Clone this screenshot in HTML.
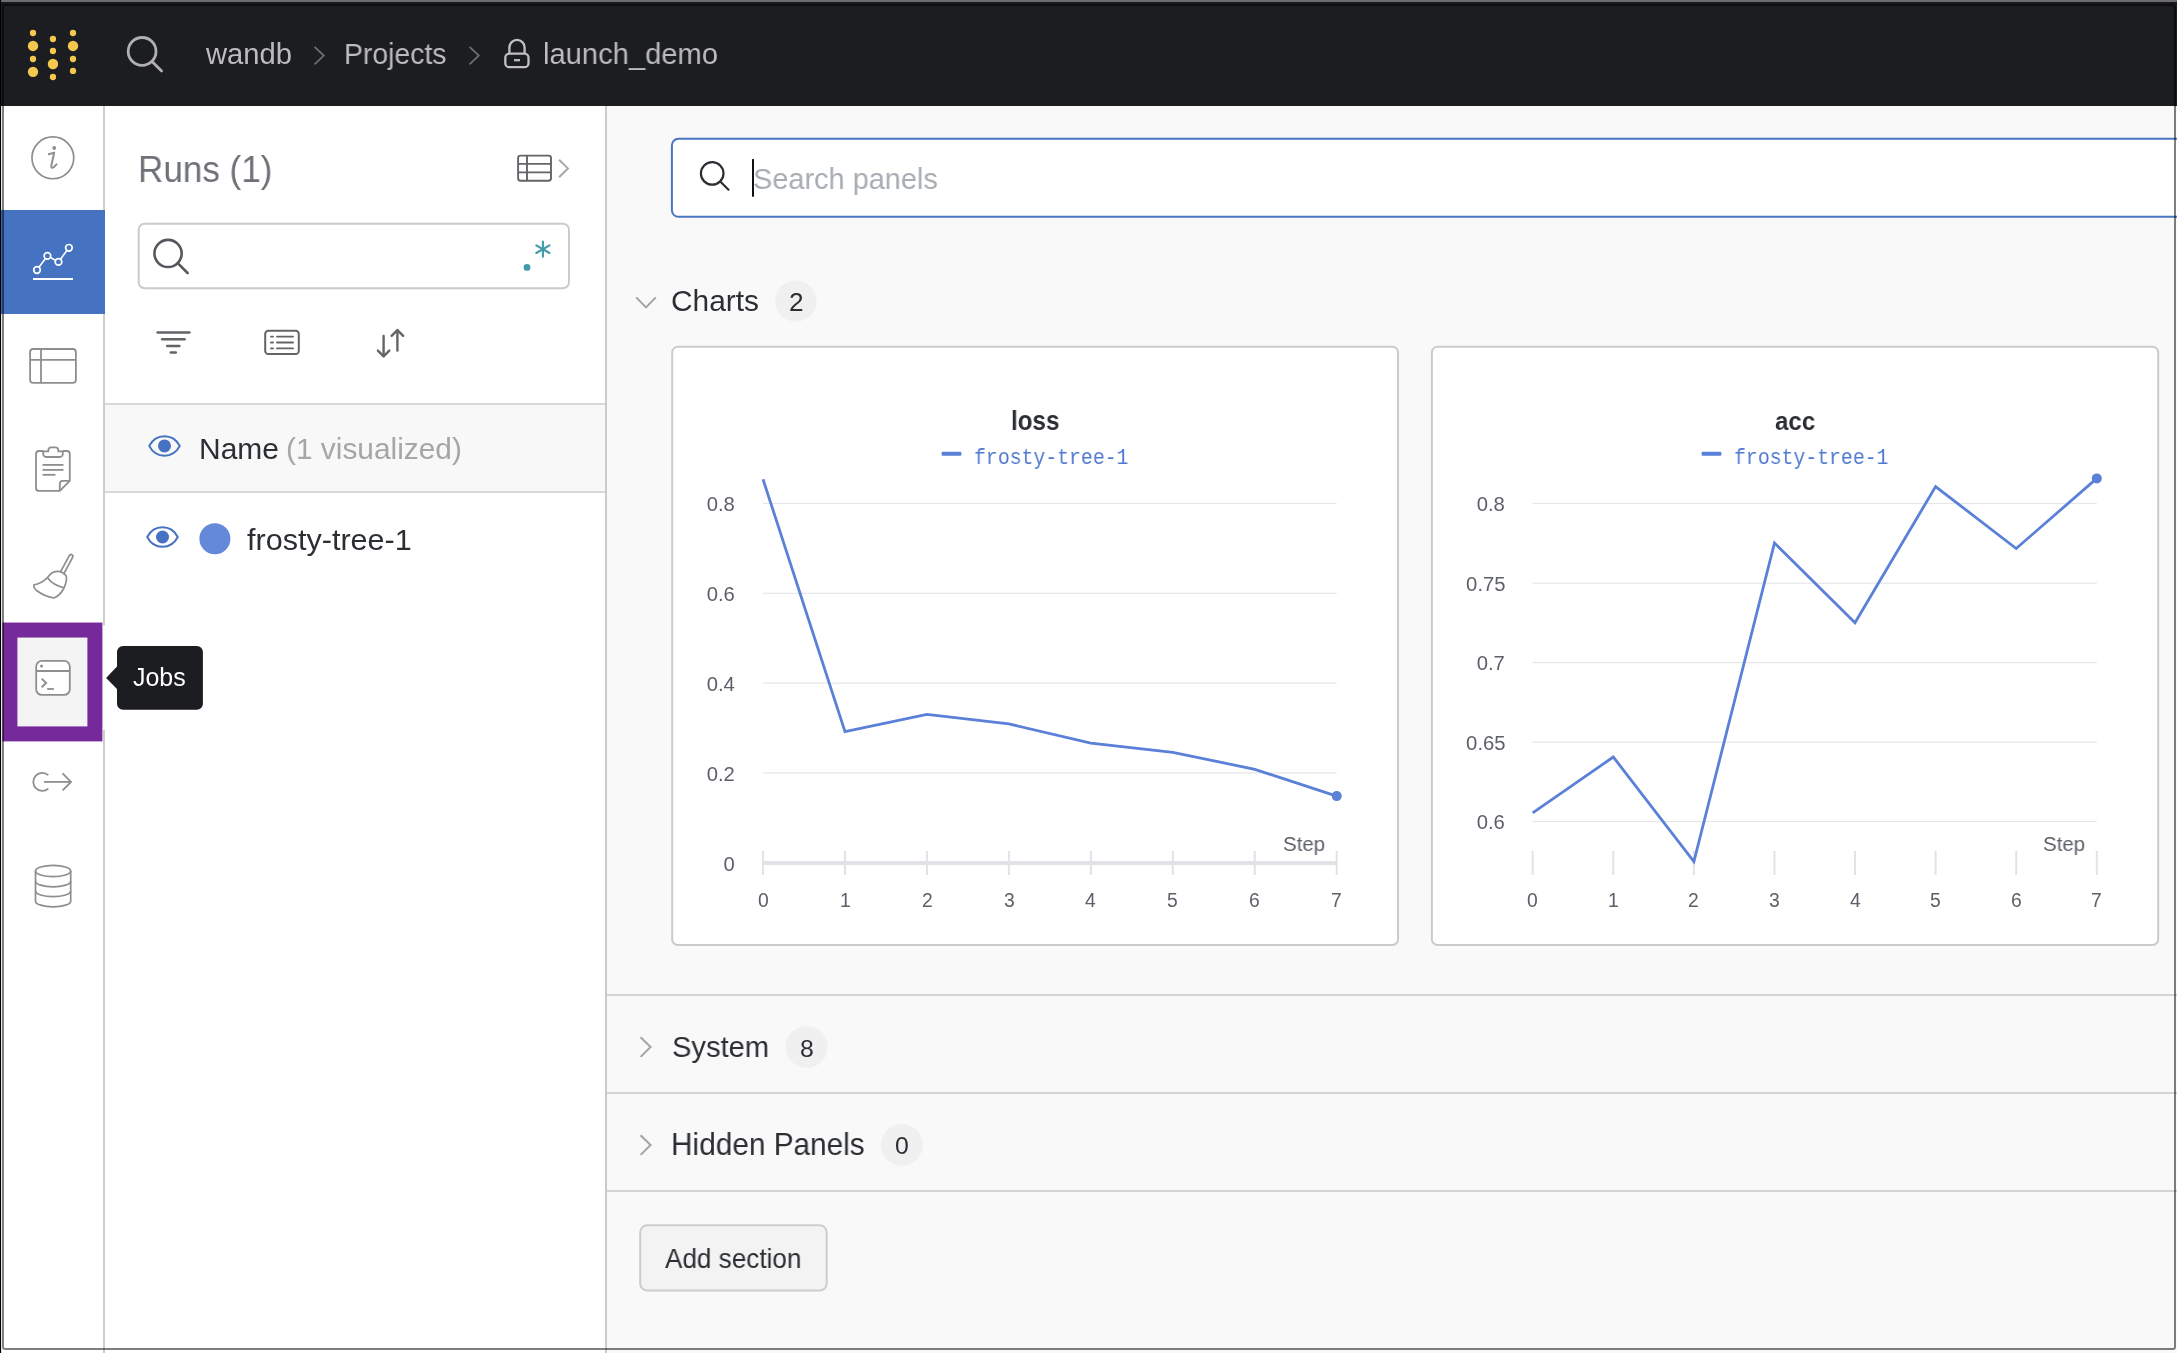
<!DOCTYPE html>
<html><head><meta charset="utf-8"><title>launch_demo</title>
<style>
html,body{margin:0;padding:0;}
body{width:2177px;height:1353px;overflow:hidden;position:relative;background:#f9f9f9;font-family:"Liberation Sans",sans-serif;}
#hdr{position:absolute;left:0;top:0;width:2177px;height:106px;background:#1c1d21;}
#side{position:absolute;left:0;top:106px;width:103px;height:1247px;background:#fff;border-right:2px solid #cdcdcd;box-sizing:content-box;}
#active{position:absolute;left:0;top:210px;width:104.5px;height:103.5px;background:#4673c1;}
#runs{position:absolute;left:105px;top:106px;width:500px;height:1247px;background:#fff;border-right:2px solid #cbcbcb;}
#namerow{position:absolute;left:105px;top:403px;width:500px;height:86px;background:#f8f8f8;border-top:2px solid #d9d9d9;border-bottom:2px solid #d9d9d9;}
.ov{position:absolute;left:0;top:0;}
.t{position:absolute;line-height:1;white-space:pre;transform-origin:0 0;will-change:transform;}
.tr{position:absolute;left:0;line-height:1;white-space:pre;text-align:right;font-family:"Liberation Sans",sans-serif;}
.tr span{display:inline-block;transform-origin:100% 0;will-change:transform;}
.tc{position:absolute;width:120px;line-height:1;white-space:pre;text-align:center;font-family:"Liberation Sans",sans-serif;}
.tc span{display:inline-block;transform-origin:50% 0;will-change:transform;}
</style></head><body>
<div id="hdr"></div>
<div id="side"></div>
<div id="active"></div>
<div id="runs"></div>
<div id="namerow"></div>
<svg class="ov" width="2177" height="1353" viewBox="0 0 2177 1353">
<circle cx="33" cy="33" r="3.15" fill="#f4c84f"/>
<circle cx="33" cy="45.94" r="5.19" fill="#f4c84f"/>
<circle cx="33" cy="58.98" r="3.15" fill="#f4c84f"/>
<circle cx="33" cy="71.84" r="5.19" fill="#f4c84f"/>
<circle cx="52.95" cy="39.02" r="3.15" fill="#f4c84f"/>
<circle cx="52.95" cy="51" r="3.15" fill="#f4c84f"/>
<circle cx="52.95" cy="64.04" r="5.19" fill="#f4c84f"/>
<circle cx="52.95" cy="76.98" r="3.15" fill="#f4c84f"/>
<circle cx="72.99" cy="33" r="3.15" fill="#f4c84f"/>
<circle cx="72.99" cy="45.94" r="5.19" fill="#f4c84f"/>
<circle cx="72.99" cy="58.98" r="3.15" fill="#f4c84f"/>
<circle cx="72.99" cy="70.95" r="3.15" fill="#f4c84f"/>
<circle cx="142.1" cy="51.4" r="13.9" fill="none" stroke="#b0b0b0" stroke-width="2.8"/>
<line x1="152" y1="61.5" x2="161.6" y2="71.1" stroke="#b0b0b0" stroke-width="2.8" stroke-linecap="round"/>
<polyline points="314.5,46.8 323.8,55.6 314.5,64.4" fill="none" stroke="#6e6e70" stroke-width="1.8"/>
<polyline points="469.5,46.8 478.8,55.6 469.5,64.4" fill="none" stroke="#6e6e70" stroke-width="1.8"/>
<path d="M509.4 53 V47.5 A7.6 7.6 0 0 1 524.6 47.5 V53" fill="none" stroke="#c0c0c0" stroke-width="2.3"/>
<rect x="505.3" y="53.6" width="23.2" height="13.6" rx="4" fill="none" stroke="#c0c0c0" stroke-width="2.3"/>
<line x1="514" y1="60.2" x2="520" y2="60.2" stroke="#c0c0c0" stroke-width="2.3"/>
<circle cx="52.85" cy="157.85" r="20.9" fill="none" stroke="#8e8e8e" stroke-width="1.7"/>
<circle cx="54.2" cy="148" r="1.9" fill="#8e8e8e"/>
<path d="M48.8 154.3 L54.2 152.6 L51.3 165.8 Q51 168.6 53.6 167.4 L56.5 164.4" fill="none" stroke="#8e8e8e" stroke-width="2" stroke-linejoin="round" stroke-linecap="round"/>
<polyline points="37,270 47.4,255.9 58.5,261.9 68.9,247.8" fill="none" stroke="#fff" stroke-width="1.6"/>
<circle cx="37" cy="270" r="3.3" fill="#4673c1" stroke="#fff" stroke-width="1.7"/>
<circle cx="47.4" cy="255.9" r="3.3" fill="#4673c1" stroke="#fff" stroke-width="1.7"/>
<circle cx="58.5" cy="261.9" r="3.3" fill="#4673c1" stroke="#fff" stroke-width="1.7"/>
<circle cx="68.9" cy="247.8" r="3.3" fill="#4673c1" stroke="#fff" stroke-width="1.7"/>
<line x1="33" y1="279" x2="73" y2="279" stroke="#fff" stroke-width="2"/>
<rect x="30.1" y="349" width="45.8" height="33.9" rx="3.2" fill="none" stroke="#8e8e8e" stroke-width="1.8"/>
<line x1="30.1" y1="359.9" x2="75.9" y2="359.9" stroke="#8e8e8e" stroke-width="1.8"/>
<line x1="41" y1="349" x2="41" y2="382.9" stroke="#8e8e8e" stroke-width="1.8"/>
<path d="M43.2 451 H39 A3 3 0 0 0 36 454 V487.9 A3 3 0 0 0 39 490.9 H59.8 L69.8 480.8 V454 A3 3 0 0 0 66.8 451 H62.8" fill="none" stroke="#8e8e8e" stroke-width="1.8" stroke-linejoin="round"/>
<path d="M48.3 451.4 V450.3 A3 3 0 0 1 51.3 447.3 H55.3 A3 3 0 0 1 58.3 450.3 V451.4 H62.8 V454 A3 3 0 0 1 59.8 457 H46.2 A3 3 0 0 1 43.2 454 V451.4 Z" fill="none" stroke="#8e8e8e" stroke-width="1.8" stroke-linejoin="round"/>
<path d="M59.8 490.6 V483.8 A3 3 0 0 1 62.8 480.8 H69.6" fill="none" stroke="#8e8e8e" stroke-width="1.8"/>
<line x1="42.5" y1="464.9" x2="63.5" y2="464.9" stroke="#8e8e8e" stroke-width="1.8"/>
<line x1="42.5" y1="469.9" x2="63.5" y2="469.9" stroke="#8e8e8e" stroke-width="1.8"/>
<line x1="42.5" y1="474.8" x2="55.4" y2="474.8" stroke="#8e8e8e" stroke-width="1.8"/>
<path d="M60.2 572.4 L69.3 555.6 A1.8 1.8 0 0 1 72.6 557.3 L63.5 574.3" fill="none" stroke="#8e8e8e" stroke-width="1.7" stroke-linejoin="round"/>
<path d="M47.4 577.7 Q52 570.5 58.5 571.4 Q64 572.3 66.2 576 Q67.5 580 63.8 588.5 Q59.6 596 54 598 Q44.4 596.5 36.6 590.5 Q33 587 33.9 584.9 Q41 584 47.4 577.7 Z" fill="none" stroke="#8e8e8e" stroke-width="1.7" stroke-linejoin="round"/>
<path d="M47.4 577.7 Q53 585 63.9 587.8" fill="none" stroke="#8e8e8e" stroke-width="1.7"/>
<rect x="102" y="625.4" width="4" height="104.6" fill="#fcfcfc"/>
<rect x="9.9" y="630.05" width="85" height="103.85" fill="#f4f4f4" stroke="#75299b" stroke-width="15"/>
<rect x="36.2" y="660.9" width="33.6" height="34" rx="5.6" fill="#fff" stroke="#8e8e8e" stroke-width="1.8"/>
<line x1="36.2" y1="671" x2="69.8" y2="671" stroke="#8e8e8e" stroke-width="1.8"/>
<circle cx="41.5" cy="666" r="1.5" fill="#8e8e8e"/>
<polyline points="41.7,678.6 46.1,683 41.7,687.3" fill="none" stroke="#8e8e8e" stroke-width="1.9"/>
<line x1="47.2" y1="689" x2="53.9" y2="689" stroke="#8e8e8e" stroke-width="1.8"/>
<path d="M123 646 H196.9 A6 6 0 0 1 202.9 652 V703.8 A6 6 0 0 1 196.9 709.8 H123 A6 6 0 0 1 117 703.8 V689.1 L106.1 677.9 L117 666.6 V652 A6 6 0 0 1 123 646 Z" fill="#1c1d21"/>
<path d="M48.3 775.2 A9 9 0 1 0 48.3 788.6" fill="none" stroke="#8e8e8e" stroke-width="1.8"/>
<line x1="44" y1="781.9" x2="71" y2="781.9" stroke="#8e8e8e" stroke-width="1.8"/>
<polyline points="62.6,773.4 71,781.9 62.6,790.3" fill="none" stroke="#8e8e8e" stroke-width="1.8"/>
<ellipse cx="53.1" cy="871" rx="17.6" ry="5.6" fill="none" stroke="#8e8e8e" stroke-width="1.7"/>
<path d="M35.5 871 V901.2 A17.6 5.6 0 0 0 70.7 901.2 V871" fill="none" stroke="#8e8e8e" stroke-width="1.7"/>
<path d="M35.5 881.2 A17.6 5.6 0 0 0 70.7 881.2" fill="none" stroke="#8e8e8e" stroke-width="1.7"/>
<path d="M35.5 891 A17.6 5.6 0 0 0 70.7 891" fill="none" stroke="#8e8e8e" stroke-width="1.7"/>
<rect x="518.1" y="155.6" width="32.9" height="25.1" rx="2.4" fill="none" stroke="#626468" stroke-width="1.9"/>
<line x1="518.1" y1="163.9" x2="551" y2="163.9" stroke="#626468" stroke-width="1.9"/>
<line x1="518.1" y1="172.4" x2="551" y2="172.4" stroke="#626468" stroke-width="1.9"/>
<line x1="527" y1="155.6" x2="527" y2="180.7" stroke="#626468" stroke-width="1.9"/>
<polyline points="559.1,159.8 567.9,168.4 559.1,177.2" fill="none" stroke="#a8a8a8" stroke-width="2"/>
<rect x="138.7" y="223.7" width="430.3" height="64.5" rx="6" fill="#fff" stroke="#cbcbcb" stroke-width="2"/>
<circle cx="168.05" cy="253.45" r="13.6" fill="none" stroke="#55585d" stroke-width="2.6"/>
<line x1="177.7" y1="263.1" x2="187.6" y2="273" stroke="#55585d" stroke-width="2.6" stroke-linecap="round"/>
<circle cx="527" cy="267.4" r="3.4" fill="#439aab"/>
<line x1="542.90" y1="241.60" x2="542.90" y2="256.80" stroke="#439aab" stroke-width="2.1" stroke-linecap="round"/>
<line x1="536.32" y1="245.40" x2="549.48" y2="253.00" stroke="#439aab" stroke-width="2.1" stroke-linecap="round"/>
<line x1="549.48" y1="245.40" x2="536.32" y2="253.00" stroke="#439aab" stroke-width="2.1" stroke-linecap="round"/>
<line x1="157.6" y1="332.4" x2="189.4" y2="332.4" stroke="#626468" stroke-width="2.5" stroke-linecap="round"/>
<line x1="162.2" y1="339.2" x2="184.6" y2="339.2" stroke="#626468" stroke-width="2.5" stroke-linecap="round"/>
<line x1="167.2" y1="345.9" x2="179.4" y2="345.9" stroke="#626468" stroke-width="2.5" stroke-linecap="round"/>
<line x1="170.8" y1="352.5" x2="175.8" y2="352.5" stroke="#626468" stroke-width="2.5" stroke-linecap="round"/>
<rect x="265.2" y="330.7" width="33.6" height="23.4" rx="3.2" fill="none" stroke="#626468" stroke-width="2"/>
<line x1="271" y1="336.6" x2="273" y2="336.6" stroke="#626468" stroke-width="1.9" stroke-linecap="round"/>
<line x1="277" y1="336.6" x2="293" y2="336.6" stroke="#626468" stroke-width="1.9" stroke-linecap="round"/>
<line x1="271" y1="342.5" x2="273" y2="342.5" stroke="#626468" stroke-width="1.9" stroke-linecap="round"/>
<line x1="277" y1="342.5" x2="293" y2="342.5" stroke="#626468" stroke-width="1.9" stroke-linecap="round"/>
<line x1="271" y1="348.4" x2="273" y2="348.4" stroke="#626468" stroke-width="1.9" stroke-linecap="round"/>
<line x1="277" y1="348.4" x2="293" y2="348.4" stroke="#626468" stroke-width="1.9" stroke-linecap="round"/>
<line x1="383.6" y1="336" x2="383.6" y2="356" stroke="#626468" stroke-width="2.4" stroke-linecap="round"/>
<polyline points="377.9,350.6 383.6,356.3 389.3,350.6" fill="none" stroke="#626468" stroke-width="2.4" stroke-linecap="round" stroke-linejoin="round"/>
<line x1="397.4" y1="330.5" x2="397.4" y2="350.6" stroke="#626468" stroke-width="2.4" stroke-linecap="round"/>
<polyline points="391.6,335.8 397.4,330.1 403.2,335.8" fill="none" stroke="#626468" stroke-width="2.4" stroke-linecap="round" stroke-linejoin="round"/>
<path d="M149.20 445.9 C156.00 432.90 173.00 432.90 179.80 445.9 C173.00 458.90 156.00 458.90 149.20 445.9 Z" fill="none" stroke="#4572c3" stroke-width="2" stroke-linejoin="round"/><circle cx="164.5" cy="445.9" r="6.5" fill="#4572c3"/>
<path d="M147.20 537 C154.00 524.00 171.00 524.00 177.80 537 C171.00 550.00 154.00 550.00 147.20 537 Z" fill="none" stroke="#4572c3" stroke-width="2" stroke-linejoin="round"/><circle cx="162.5" cy="537" r="6.5" fill="#4572c3"/>
<circle cx="214.9" cy="538.7" r="15.5" fill="#6489d9"/>
<rect x="671.9" y="138.8" width="1520" height="78" rx="6.5" fill="#fff" stroke="#4a76c6" stroke-width="2"/>
<circle cx="712.2" cy="173.4" r="11.3" fill="none" stroke="#2b2e33" stroke-width="2.2"/>
<line x1="720.5" y1="181.7" x2="728.5" y2="189.7" stroke="#2b2e33" stroke-width="2.2" stroke-linecap="round"/>
<rect x="752" y="159.1" width="2" height="37.6" fill="#111"/>
<polyline points="636.2,297.4 646,307.4 655.8,297.4" fill="none" stroke="#a3a3a3" stroke-width="2"/>
<circle cx="795.9" cy="301" r="20.7" fill="#f0f0f0"/>
<rect x="672.2" y="346.8" width="725.8" height="598.1" rx="5.5" fill="#fff" stroke="#cbcbcb" stroke-width="2"/>
<rect x="1431.9" y="346.8" width="726.3" height="598.1" rx="5.5" fill="#fff" stroke="#cbcbcb" stroke-width="2"/>
<rect x="607" y="994" width="1570" height="2" fill="#d4d4d4"/>
<rect x="607" y="1092" width="1570" height="2" fill="#d4d4d4"/>
<rect x="607" y="1190" width="1570" height="2" fill="#d4d4d4"/>
<polyline points="640.6,1037.2 650.6,1047.05 640.6,1056.9" fill="none" stroke="#a3a3a3" stroke-width="2"/>
<polyline points="640.6,1135.2 650.6,1145.05 640.6,1154.9" fill="none" stroke="#a3a3a3" stroke-width="2"/>
<circle cx="806.7" cy="1046.9" r="21" fill="#f0f0f0"/>
<circle cx="901.8" cy="1144.8" r="21" fill="#f0f0f0"/>
<rect x="640.2" y="1225.3" width="186.5" height="65.2" rx="7" fill="#f3f3f3" stroke="#cdcdcd" stroke-width="2"/>
<rect x="763" y="502.9" width="573.7" height="1.2" fill="#e6e6ea"/>
<rect x="763" y="592.6999999999999" width="573.7" height="1.2" fill="#e6e6ea"/>
<rect x="763" y="682.5" width="573.7" height="1.2" fill="#e6e6ea"/>
<rect x="763" y="772.3" width="573.7" height="1.2" fill="#e6e6ea"/>
<rect x="763" y="861" width="573.7" height="4" fill="#e3e3e7"/>
<rect x="762.0" y="851" width="2" height="24" fill="#e3e3e7"/>
<rect x="843.96" y="851" width="2" height="24" fill="#e3e3e7"/>
<rect x="925.92" y="851" width="2" height="24" fill="#e3e3e7"/>
<rect x="1007.88" y="851" width="2" height="24" fill="#e3e3e7"/>
<rect x="1089.84" y="851" width="2" height="24" fill="#e3e3e7"/>
<rect x="1171.8" y="851" width="2" height="24" fill="#e3e3e7"/>
<rect x="1253.76" y="851" width="2" height="24" fill="#e3e3e7"/>
<rect x="1335.7199999999998" y="851" width="2" height="24" fill="#e3e3e7"/>
<polyline points="763.0,479.2 845.0,731.7 926.9,714.3 1008.9,723.9 1090.8,743.2 1172.8,752.3 1254.8,769.3 1336.7,796.1" fill="none" stroke="#5a80d7" stroke-width="2.8" stroke-linejoin="miter"/>
<circle cx="1336.7199999999998" cy="796.1" r="5" fill="#5a80d7"/>
<rect x="941.6" y="451.8" width="19.8" height="4" rx="1" fill="#5a80d7"/>
<rect x="1532.7" y="502.9" width="564.1" height="1.2" fill="#e6e6ea"/>
<rect x="1532.7" y="582.6" width="564.1" height="1.2" fill="#e6e6ea"/>
<rect x="1532.7" y="662.0" width="564.1" height="1.2" fill="#e6e6ea"/>
<rect x="1532.7" y="741.6" width="564.1" height="1.2" fill="#e6e6ea"/>
<rect x="1532.7" y="820.9" width="564.1" height="1.2" fill="#e6e6ea"/>
<rect x="1531.7" y="851" width="2" height="24" fill="#e3e3e7"/>
<rect x="1612.286" y="851" width="2" height="24" fill="#e3e3e7"/>
<rect x="1692.872" y="851" width="2" height="24" fill="#e3e3e7"/>
<rect x="1773.458" y="851" width="2" height="24" fill="#e3e3e7"/>
<rect x="1854.044" y="851" width="2" height="24" fill="#e3e3e7"/>
<rect x="1934.63" y="851" width="2" height="24" fill="#e3e3e7"/>
<rect x="2015.216" y="851" width="2" height="24" fill="#e3e3e7"/>
<rect x="2095.802" y="851" width="2" height="24" fill="#e3e3e7"/>
<polyline points="1532.7,812.9 1613.3,757 1693.9,861.5 1774.5,543 1855.0,622.7 1935.6,486.6 2016.2,548.5 2096.8,478.4" fill="none" stroke="#5a80d7" stroke-width="2.8" stroke-linejoin="miter"/>
<circle cx="2096.802" cy="478.4" r="5" fill="#5a80d7"/>
<rect x="1701.6" y="451.8" width="19.8" height="4" rx="1" fill="#5a80d7"/>
<rect x="0" y="0" width="2177" height="2" fill="#6b6c70"/>
<rect x="0" y="2" width="2177" height="2" fill="#16171b"/>
<rect x="0" y="0" width="1.1" height="1353" fill="#000"/>
<rect x="3" y="5" width="2172" height="1344" rx="2" fill="none" stroke="rgba(0,0,0,0.5)" stroke-width="2"/>
</svg>
<span class="t" style="left:205.9px;top:40.4px;font-family:'Liberation Sans',sans-serif;font-weight:400;font-size:28.92px;color:#bcbcbc;transform:scaleX(1.0095)">wandb</span>
<span class="t" style="left:344.06px;top:39.4px;font-family:'Liberation Sans',sans-serif;font-weight:400;font-size:29.28px;color:#bcbcbc;transform:scaleX(0.9699)">Projects</span>
<span class="t" style="left:543.11px;top:38.8px;font-family:'Liberation Sans',sans-serif;font-weight:400;font-size:29.32px;color:#bcbcbc;transform:scaleX(0.9942)">launch_demo</span>
<span class="t" style="left:137.5px;top:150.9px;font-family:'Liberation Sans',sans-serif;font-weight:400;font-size:37.57px;color:#6e7177;transform:scaleX(0.9331)">Runs (1)</span>
<span class="t" style="left:198.89px;top:433.6px;font-family:'Liberation Sans',sans-serif;font-weight:400;font-size:29.86px;color:#2b2e32;transform:scaleX(1.0039)">Name</span>
<span class="t" style="left:285.5px;top:433.6px;font-family:'Liberation Sans',sans-serif;font-weight:400;font-size:29.86px;color:#a6a6a6;transform:scaleX(1.0)">(1 visualized)</span>
<span class="t" style="left:247.4px;top:525.6px;font-family:'Liberation Sans',sans-serif;font-weight:400;font-size:29.13px;color:#2b2e32;transform:scaleX(1.0494)">frosty-tree-1</span>
<span class="t" style="left:132.8px;top:665.2px;font-family:'Liberation Sans',sans-serif;font-weight:400;font-size:24.86px;color:#ffffff;transform:scaleX(1.0039)">Jobs</span>
<span class="t" style="left:753.13px;top:163.9px;font-family:'Liberation Sans',sans-serif;font-weight:400;font-size:29.86px;color:#a7adb2;transform:scaleX(0.9683)">Search panels</span>
<span class="t" style="left:671.3px;top:285.9px;font-family:'Liberation Sans',sans-serif;font-weight:400;font-size:29.86px;color:#2b2e32;transform:scaleX(0.9965)">Charts</span>
<span class="t" style="left:788.79px;top:288.9px;font-family:'Liberation Sans',sans-serif;font-weight:400;font-size:26.0px;color:#2b2e32;transform:scaleX(1.0083)">2</span>
<span class="t" style="left:1011.02px;top:406.9px;font-family:'Liberation Sans',sans-serif;font-weight:700;font-size:27.12px;color:#2b2e32;transform:scaleX(0.8922)">loss</span>
<span class="t" style="left:1775.17px;top:409.1px;font-family:'Liberation Sans',sans-serif;font-weight:700;font-size:25.82px;color:#2b2e32;transform:scaleX(0.9341)">acc</span>
<span class="t" style="left:974.21px;top:447.9px;font-family:'Liberation Mono',sans-serif;font-weight:400;font-size:22.19px;color:#4f78d0;transform:scaleX(0.8924)">frosty-tree-1</span>
<span class="t" style="left:1282.82px;top:834.3px;font-family:'Liberation Sans',sans-serif;font-weight:400;font-size:20.85px;color:#5d6068;transform:scaleX(0.9805)">Step</span>
<span class="t" style="left:671.73px;top:1032.2px;font-family:'Liberation Sans',sans-serif;font-weight:400;font-size:30.14px;color:#2b2e32;transform:scaleX(0.9673)">System</span>
<span class="t" style="left:799.92px;top:1036.9px;font-family:'Liberation Sans',sans-serif;font-weight:400;font-size:24.79px;color:#2b2e32;transform:scaleX(0.975)">8</span>
<span class="t" style="left:671.45px;top:1128.8px;font-family:'Liberation Sans',sans-serif;font-weight:400;font-size:30.58px;color:#2b2e32;transform:scaleX(0.974)">Hidden Panels</span>
<span class="t" style="left:894.99px;top:1134.4px;font-family:'Liberation Sans',sans-serif;font-weight:400;font-size:24.65px;color:#2b2e32;transform:scaleX(1.0083)">0</span>
<span class="t" style="left:665.2px;top:1244.9px;font-family:'Liberation Sans',sans-serif;font-weight:400;font-size:27.25px;color:#2b2e32;transform:scaleX(0.9582)">Add section</span>
<span class="t" style="left:1734.21px;top:447.9px;font-family:'Liberation Mono',sans-serif;font-weight:400;font-size:22.19px;color:#4f78d0;transform:scaleX(0.8924)">frosty-tree-1</span>
<span class="t" style="left:2042.82px;top:834.3px;font-family:'Liberation Sans',sans-serif;font-weight:400;font-size:20.85px;color:#5d6068;transform:scaleX(0.9805)">Step</span>
<div class="tr" style="width:734.6px;top:495.16px;font-size:19.3px;color:#5d6068"><span style="transform:scaleX(1.05)">0.8</span></div>
<div class="tr" style="width:734.6px;top:584.96px;font-size:19.3px;color:#5d6068"><span style="transform:scaleX(1.05)">0.6</span></div>
<div class="tr" style="width:734.6px;top:674.76px;font-size:19.3px;color:#5d6068"><span style="transform:scaleX(1.05)">0.4</span></div>
<div class="tr" style="width:734.6px;top:764.56px;font-size:19.3px;color:#5d6068"><span style="transform:scaleX(1.05)">0.2</span></div>
<div class="tr" style="width:734.6px;top:854.66px;font-size:19.3px;color:#5d6068"><span style="transform:scaleX(1.05)">0</span></div>
<div class="tr" style="width:1505.2px;top:495.16px;font-size:19.3px;color:#5d6068"><span style="transform:scaleX(1.05)">0.8</span></div>
<div class="tr" style="width:1505.2px;top:574.96px;font-size:19.3px;color:#5d6068"><span style="transform:scaleX(1.05)">0.75</span></div>
<div class="tr" style="width:1505.2px;top:654.16px;font-size:19.3px;color:#5d6068"><span style="transform:scaleX(1.05)">0.7</span></div>
<div class="tr" style="width:1505.2px;top:733.96px;font-size:19.3px;color:#5d6068"><span style="transform:scaleX(1.05)">0.65</span></div>
<div class="tr" style="width:1505.2px;top:813.16px;font-size:19.3px;color:#5d6068"><span style="transform:scaleX(1.05)">0.6</span></div>
<div class="tc" style="left:703.00px;top:890.66px;font-size:19.3px;color:#5d6068"><span style="transform:scaleX(1.0)">0</span></div>
<div class="tc" style="left:784.96px;top:890.66px;font-size:19.3px;color:#5d6068"><span style="transform:scaleX(1.0)">1</span></div>
<div class="tc" style="left:866.92px;top:890.66px;font-size:19.3px;color:#5d6068"><span style="transform:scaleX(1.0)">2</span></div>
<div class="tc" style="left:948.88px;top:890.66px;font-size:19.3px;color:#5d6068"><span style="transform:scaleX(1.0)">3</span></div>
<div class="tc" style="left:1030.84px;top:890.66px;font-size:19.3px;color:#5d6068"><span style="transform:scaleX(1.0)">4</span></div>
<div class="tc" style="left:1112.80px;top:890.66px;font-size:19.3px;color:#5d6068"><span style="transform:scaleX(1.0)">5</span></div>
<div class="tc" style="left:1194.76px;top:890.66px;font-size:19.3px;color:#5d6068"><span style="transform:scaleX(1.0)">6</span></div>
<div class="tc" style="left:1276.72px;top:890.66px;font-size:19.3px;color:#5d6068"><span style="transform:scaleX(1.0)">7</span></div>
<div class="tc" style="left:1472.70px;top:890.66px;font-size:19.3px;color:#5d6068"><span style="transform:scaleX(1.0)">0</span></div>
<div class="tc" style="left:1553.29px;top:890.66px;font-size:19.3px;color:#5d6068"><span style="transform:scaleX(1.0)">1</span></div>
<div class="tc" style="left:1633.87px;top:890.66px;font-size:19.3px;color:#5d6068"><span style="transform:scaleX(1.0)">2</span></div>
<div class="tc" style="left:1714.46px;top:890.66px;font-size:19.3px;color:#5d6068"><span style="transform:scaleX(1.0)">3</span></div>
<div class="tc" style="left:1795.04px;top:890.66px;font-size:19.3px;color:#5d6068"><span style="transform:scaleX(1.0)">4</span></div>
<div class="tc" style="left:1875.63px;top:890.66px;font-size:19.3px;color:#5d6068"><span style="transform:scaleX(1.0)">5</span></div>
<div class="tc" style="left:1956.22px;top:890.66px;font-size:19.3px;color:#5d6068"><span style="transform:scaleX(1.0)">6</span></div>
<div class="tc" style="left:2036.80px;top:890.66px;font-size:19.3px;color:#5d6068"><span style="transform:scaleX(1.0)">7</span></div>
</body></html>
